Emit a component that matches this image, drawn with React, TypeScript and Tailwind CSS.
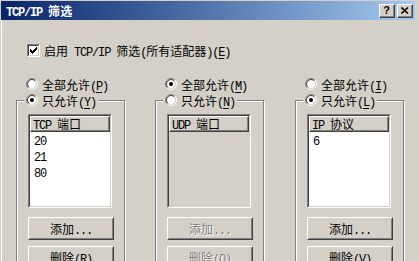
import React from "react";
import clsx from "clsx";

const LATIN = "font-['Liberation_Mono',monospace] text-[12px] tracking-[-1.2px]";
const CJK = "font-['Noto_Sans_CJK_SC',sans-serif] text-[12px]";

// "&" marks the mnemonic letter (underlined)
function Txt({ s }: { s: string }) {
  const nodes: React.ReactNode[] = [];
  let u = false;
  [...s].forEach((ch, i) => {
    if (ch === "&") {
      u = true;
      return;
    }
    const latin = ch.charCodeAt(0) < 128;
    nodes.push(
      <span
        key={i}
        className={clsx(latin ? LATIN : CJK, u && "underline underline-offset-2")}
      >
        {ch}
      </span>
    );
    u = false;
  });
  return <span className="whitespace-pre">{nodes}</span>;
}

function Radio({ checked }: { checked: boolean }) {
  const a = (r: number) => {
    const d = r * 0.7071;
    return { bl: `${6 - d},${6 + d}`, tr: `${6 + d},${6 - d}` };
  };
  const o = a(5.5);
  const i = a(4.5);
  return (
    <svg width="12" height="12" viewBox="0 0 12 12" className="shrink-0">
      <circle cx="6" cy="6" r="4.5" fill="#fff" />
      <path d={`M${o.bl} A5.5 5.5 0 0 1 ${o.tr}`} stroke="#808080" fill="none" />
      <path d={`M${o.tr} A5.5 5.5 0 0 1 ${o.bl}`} stroke="#fff" fill="none" />
      <path d={`M${i.bl} A4.5 4.5 0 0 1 ${i.tr}`} stroke="#404040" fill="none" />
      <path d={`M${i.tr} A4.5 4.5 0 0 1 ${i.bl}`} stroke="#d4d0c8" fill="none" />
      {checked && <circle cx="6" cy="6" r="2" fill="#000" />}
    </svg>
  );
}

function Checkbox() {
  const cols = [3, 4, 5, 4, 3, 2, 1];
  return (
    <div className="w-[13px] h-[13px] shrink-0 border border-t-[#808080] border-l-[#808080] border-r-white border-b-white">
      <div className="w-full h-full bg-white border border-t-[#404040] border-l-[#404040] border-r-[#d4d0c8] border-b-[#d4d0c8]">
        <svg width="9" height="9" viewBox="-1 -1 9 9" shapeRendering="crispEdges">
          {cols.map((y, x) => (
            <rect key={x} x={x} y={y - 1} width="1" height="3" fill="#000" />
          ))}
        </svg>
      </div>
    </div>
  );
}

function Btn({ label, disabled }: { label: string; disabled?: boolean }) {
  return (
    <div className="w-[86px] h-[23px] border border-t-white border-l-white border-r-[#404040] border-b-[#404040]">
      <div
        className={clsx(
          "h-full flex items-center justify-center leading-none border border-t-[#d4d0c8] border-l-[#d4d0c8] border-r-[#808080] border-b-[#808080]",
          disabled && "text-[#808080] [text-shadow:1px_1px_0_#fff]"
        )}
      >
        <Txt s={label} />
      </div>
    </div>
  );
}

type Group = {
  all: string;
  only: string;
  allowAll: boolean;
  header: string;
  items: string[];
  del: string;
  ml: string;
};

const groups: Group[] = [
  { all: "全部允许(&P)", only: "只允许(&Y)", allowAll: false, header: "TCP 端口", items: ["20", "21", "80"], del: "删除(&R)", ml: "ml-[15px]" },
  { all: "全部允许(&M)", only: "只允许(&N)", allowAll: true, header: "UDP 端口", items: [], del: "删除(&O)", ml: "ml-[30px]" },
  { all: "全部允许(&I)", only: "只允许(&L)", allowAll: false, header: "IP 协议", items: ["6"], del: "删除(&V)", ml: "ml-[31px]" },
];

function Column({ g }: { g: Group }) {
  const off = g.allowAll;
  return (
    <div className={clsx("w-[109px] shrink-0", g.ml)}>
      <div className="h-[16px] flex items-center gap-[4px] pl-[10px]">
        <Radio checked={g.allowAll} />
        <Txt s={g.all} />
      </div>
      <fieldset className="h-[200px] border border-[#808080] shadow-[inset_1px_1px_0_#fff,1px_1px_0_#fff]">
        <legend className="ml-[7px] px-[2px] bg-[#d4d0c8]">
          <div className="h-[16px] flex items-center gap-[4px]">
            <Radio checked={!g.allowAll} />
            <Txt s={g.only} />
          </div>
        </legend>
        <div className="pl-[11px] pt-[6px] flex flex-col">
          <div className="w-[84px] h-[94px] border border-t-[#808080] border-l-[#808080] border-r-white border-b-white">
            <div
              className={clsx(
                "h-full border border-t-[#404040] border-l-[#404040] border-r-[#d4d0c8] border-b-[#d4d0c8]",
                off ? "bg-[#d4d0c8]" : "bg-white"
              )}
            >
              <div className="h-[16px] bg-[#d4d0c8] border border-t-white border-l-white border-r-[#404040] border-b-[#404040]">
                <div className="h-full flex items-center pl-[2px] leading-none border-r border-b border-r-[#808080] border-b-[#808080]">
                  <Txt s={g.header} />
                </div>
              </div>
              <div className="pl-[4px] pt-[1px] leading-[13px]">
                {g.items.map((it) => (
                  <div key={it}>
                    <Txt s={it} />
                  </div>
                ))}
              </div>
            </div>
          </div>
          <div className="mt-[9px]">
            <Btn label="添加..." disabled={off} />
          </div>
          <div className="mt-[6px]">
            <Btn label={g.del} disabled={off} />
          </div>
        </div>
      </fieldset>
    </div>
  );
}

function CapBtn({ children }: { children: React.ReactNode }) {
  return (
    <div className="w-[16px] h-[14px] bg-[#d4d0c8] border border-t-white border-l-white border-r-[#404040] border-b-[#404040]">
      <div className="h-full flex items-center justify-center border-r border-b border-r-[#808080] border-b-[#808080]">
        {children}
      </div>
    </div>
  );
}

export default function App() {
  return (
    <div className="w-[419px] h-[261px] overflow-hidden bg-[#d4d0c8] pt-[1px] pl-[1px] pr-[4px] text-black">
      <div className="h-[19px] flex items-center justify-between pl-[5px] pr-[2px] bg-linear-to-r from-[#0a246a] to-[#a6caf0]">
        <div className="text-white font-bold leading-none">
          <Txt s="TCP/IP 筛选" />
        </div>
        <div className="flex gap-[2px]">
          <CapBtn>
            <span className="font-['Liberation_Sans',sans-serif] font-bold text-[11px] leading-none mt-[1px]">?</span>
          </CapBtn>
          <CapBtn>
            <svg width="8" height="7" viewBox="0 0 8 7">
              <path d="M0.5 0.5 L7 6.5 M7 0.5 L0.5 6.5" stroke="#000" strokeWidth="1.6" />
            </svg>
          </CapBtn>
        </div>
      </div>
      <div className="border-l border-l-white pt-[24px]">
        <div className="flex items-center gap-[4px] ml-[25px] h-[13px] leading-none">
          <Checkbox />
          <Txt s="启用 TCP/IP 筛选(所有适配器)(&E)" />
        </div>
        <div className="flex mt-[19px] -ml-[1px]">
          {groups.map((g) => (
            <Column key={g.header} g={g} />
          ))}
        </div>
      </div>
    </div>
  );
}
